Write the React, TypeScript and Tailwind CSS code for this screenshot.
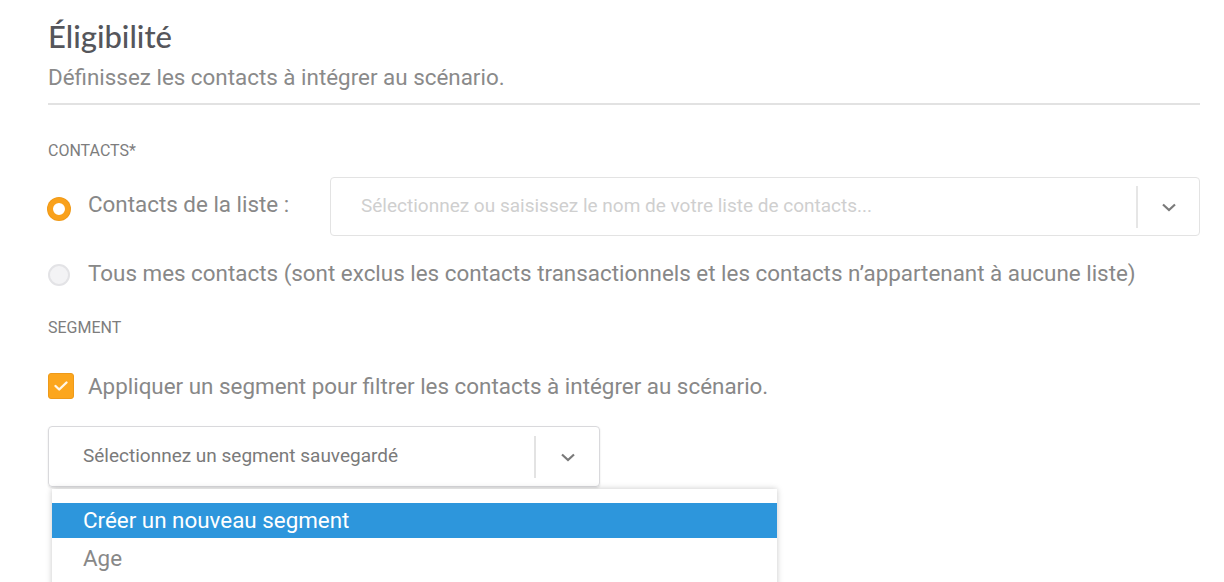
import React from 'react';

const Chevron = () => (
  <svg width="18" height="12" viewBox="0 0 18 12" fill="none">
    <path d="M3 3.5 L9 9 L15 3.5" stroke="#7a7a7a" strokeWidth="2.2" />
  </svg>
);

export default function App() {
  return (
    <div className="w-[1224px] h-[582px] overflow-hidden bg-white pl-[48px] pr-[24px] pt-[18px]" style={{ fontFamily: 'Roboto, "Liberation Sans", sans-serif' }}>
      <h1 className="text-[31px] leading-[36px] text-[#55565b] font-medium" style={{ fontFamily: 'Lato, "Liberation Sans", sans-serif' }}>
        Éligibilité
      </h1>
      <p className="mt-[10px] text-[22.4px] leading-[26px] text-[#8a8a8a]">Définissez les contacts à intégrer au scénario.</p>
      <div className="mt-[13px] h-[2px] w-[1152px] bg-[#e2e2e2]" />

      <div className="mt-[36px] text-[16px] leading-[20px] text-[#7d7d7d]">CONTACTS*</div>

      <div className="mt-[16px] flex items-center">
        <div className="mt-[5px] w-[22px] h-[22px] rounded-full border-[5px] border-[#f9a11b] bg-white shadow-[0_0_0_1px_#f09a18]" />
        <span className="ml-[18px] w-[242px] text-[22.4px] text-[#888888] -mt-[4px]">Contacts de la liste :</span>
        <div className="flex h-[59px] w-[870px] items-center rounded-[4px] border border-[#e3e3e3]">
          <span className="flex-1 pl-[30px] text-[19px] text-[#cfcfcf] whitespace-nowrap">Sélectionnez ou saisissez le nom de votre liste de contacts...</span>
          <div className="h-[42px] w-[2px] bg-[#e6e6e6]" />
          <div className="flex w-[61px] justify-center">
            <Chevron />
          </div>
        </div>
      </div>

      <div className="mt-[26px] flex h-[26px] items-center">
        <div className="w-[22px] h-[22px] rounded-full border-2 border-[#e3e3e6] bg-[#f3f3f5]" />
        <span className="ml-[18px] -mt-[5px] text-[22.4px] leading-[26px] text-[#888888] whitespace-nowrap">
          Tous mes contacts (sont exclus les contacts transactionnels et les contacts n’appartenant à aucune liste)
        </span>
      </div>

      <div className="mt-[30px] text-[16px] leading-[20px] text-[#7d7d7d]">SEGMENT</div>

      <div className="mt-[35px] flex h-[26px] items-center">
        <div className="flex w-[26px] h-[26px] items-center justify-center rounded-[3px] border border-[#ee9a1a] bg-[#fca61d]">
          <svg width="16" height="12" viewBox="0 0 16 12" fill="none">
            <path d="M2.5 6 L6.2 9.5 L13.5 2.5" stroke="#fff6e6" strokeWidth="2.4" strokeLinecap="round" strokeLinejoin="round" />
          </svg>
        </div>
        <span className="ml-[14px] text-[22.4px] leading-[26px] text-[#888888] whitespace-nowrap">Appliquer un segment pour filtrer les contacts à intégrer au scénario.</span>
      </div>

      <div className="relative mt-[27px]">
        <div className="flex h-[61px] w-[552px] items-center rounded-[4px] border border-[#d9d9dc] shadow-[0_1px_2px_rgba(0,0,0,0.12)]">
          <span className="flex-1 pl-[34px] text-[19px] text-[#7a7a7a]">Sélectionnez un segment sauvegardé</span>
          <div className="h-[42px] w-[2px] bg-[#e3e3e3]" />
          <div className="flex w-[63px] justify-center">
            <Chevron />
          </div>
        </div>
        <div className="absolute left-[4px] top-[63px] w-[725px] h-[120px] bg-white shadow-[0_0_6px_rgba(0,0,0,0.22)] pt-[14px]">
          <div className="h-[35px] bg-[#2d96dc] pl-[31px] text-[22.4px] leading-[35px] text-white">Créer un nouveau segment</div>
          <div className="h-[40px] pl-[31px] text-[22.4px] leading-[40px] text-[#888888]">Age</div>
        </div>
      </div>
    </div>
  );
}
